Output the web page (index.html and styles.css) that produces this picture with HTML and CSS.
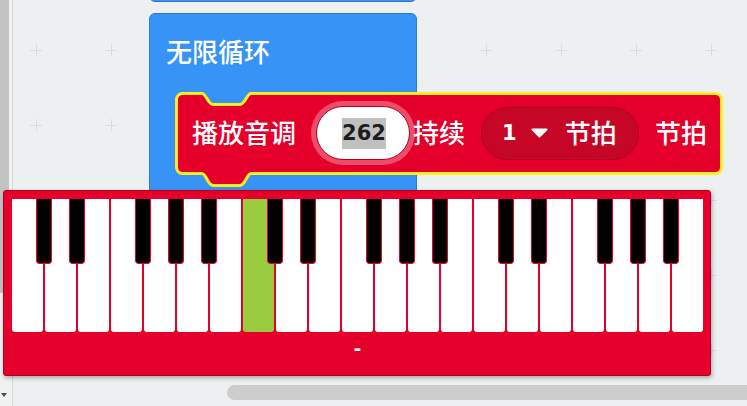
FILE: index.html
```html
<!DOCTYPE html>
<html lang="zh">
<head>
<meta charset="utf-8">
<link rel="stylesheet" href="styles.css">
</head>
<body>
<div class="app">
  <div class="vscroll">
    <div class="vthumb"></div>
    <div class="varrow"></div>
  </div>
  <div class="workspace">
    <svg class="grid" width="100%" height="100%">
      <defs>
        <pattern id="cross" x="-14" y="13" width="75" height="75" patternUnits="userSpaceOnUse">
          <path d="M31 37.5H43M37.5 31V43" stroke="#d9dde0" stroke-width="1"/>
        </pattern>
      </defs>
      <rect width="100%" height="100%" fill="url(#cross)"/>
    </svg>
  </div>

  <div class="block-above"></div>
  <div class="forever"><span class="forever-label">无限循环</span></div>

  <div class="tone">
    <svg class="tone-shape" width="548" height="97" viewBox="0 0 548 97">
      <path d="M1.5 8.5A6 6 0 0 1 7.5 2.5H27C31 2.5 33 13.5 38 13.5H65C70 13.5 72 2.5 76 2.5H540.5A6 6 0 0 1 546.5 8.5V76.5A6 6 0 0 1 540.5 82.5H76C72 82.5 70 94.5 65 94.5H38C33 94.5 31 82.5 27 82.5H7.5A6 6 0 0 1 1.5 76.5Z" fill="#e5002b" stroke="#fdee22" stroke-width="3"/>
    </svg>
    <div class="tone-row">
      <span class="label">播放音调</span>
      <span class="field"><span class="field-text">262</span></span>
      <span class="label after-field">持续</span>
      <span class="dropdown">
        <span class="dd-num">1</span>
        <svg class="dd-arrow" width="17" height="10" viewBox="0 0 17 10"><path d="M1.5 1.5H15.5L8.5 8.5Z" fill="#fff" stroke="#fff" stroke-width="2" stroke-linejoin="round"/></svg>
        <span class="label dd-label">节拍</span>
      </span>
      <span class="label after-dd">节拍</span>
    </div>
  </div>

  <div class="piano">
    <div class="keys">
      <div class="wk"></div><div class="wk"></div><div class="wk"></div><div class="wk"></div><div class="wk"></div><div class="wk"></div><div class="wk"></div>
      <div class="wk active"></div><div class="wk"></div><div class="wk"></div><div class="wk"></div><div class="wk"></div><div class="wk"></div><div class="wk"></div>
      <div class="wk"></div><div class="wk"></div><div class="wk"></div><div class="wk"></div><div class="wk"></div><div class="wk"></div><div class="wk"></div>
      <div class="bk" style="left:24px"></div>
      <div class="bk" style="left:57px"></div>
      <div class="bk" style="left:123px"></div>
      <div class="bk" style="left:156px"></div>
      <div class="bk" style="left:189px"></div>
      <div class="bk" style="left:255px"></div>
      <div class="bk" style="left:288px"></div>
      <div class="bk" style="left:354px"></div>
      <div class="bk" style="left:387px"></div>
      <div class="bk" style="left:420px"></div>
      <div class="bk" style="left:486px"></div>
      <div class="bk" style="left:519px"></div>
      <div class="bk" style="left:585px"></div>
      <div class="bk" style="left:618px"></div>
      <div class="bk" style="left:651px"></div>
    </div>
    <div class="note-label">-</div>
  </div>

  <div class="hscroll"></div>
</div>
</body>
</html>
```
FILE: styles.css
```css
html, body {
  margin: 0;
  padding: 0;
}
body {
  width: 747px;
  height: 406px;
  overflow: hidden;
  font-family: "Noto Sans CJK SC", "Noto Sans", sans-serif;
}
.app {
  position: relative;
  width: 747px;
  height: 406px;
  display: flex;
  overflow: hidden;
  background: #ecf0f1;
}
.vscroll {
  width: 12px;
  flex: 0 0 12px;
  border-right: 1px solid #d8d8d8;
  background: #f0f1f1;
  display: flex;
  flex-direction: column;
}
.vthumb {
  width: 9px;
  height: 293px;
  background: #c3c3c3;
}
.varrow {
  margin-top: auto;
  margin-bottom: 9px;
  margin-left: 1px;
  width: 0;
  height: 0;
  border-left: 3.5px solid transparent;
  border-right: 3.5px solid transparent;
  border-top: 4px solid #4a4a4a;
}
.workspace {
  flex: 1;
  position: relative;
  background: #ecf0f1;
}
.grid {
  display: block;
}
.block-above {
  position: absolute;
  left: 149px;
  top: -10px;
  width: 268px;
  height: 12px;
  box-sizing: border-box;
  background: #3793f5;
  border: 1px solid #2a78d2;
  border-radius: 0 0 6px 6px;
}
.forever {
  position: absolute;
  left: 149px;
  top: 13px;
  width: 268px;
  height: 300px;
  box-sizing: border-box;
  background: #3793f5;
  border: 1px solid #2a78d2;
  border-radius: 6px;
  padding: 21px 0 0 16px;
}
.forever-label {
  color: #fff;
  font-size: 26px;
  font-weight: 500;
  line-height: 32px;
  display: block;
}
.tone {
  position: absolute;
  left: 175px;
  top: 91px;
  width: 548px;
  height: 97px;
}
.tone-shape {
  position: absolute;
  left: 0;
  top: 0;
}
.tone-row {
  position: relative;
  height: 84px;
  display: flex;
  align-items: center;
  padding-left: 17px;
}
.label {
  color: #fff;
  font-size: 26px;
  font-weight: 500;
  line-height: 32px;
  white-space: nowrap;
  margin-top: -2px;
}
.field {
  margin-left: 20px;
  width: 94px;
  height: 54px;
  box-sizing: border-box;
  background: #fff;
  border: 1px solid #b0001f;
  border-radius: 27px;
  box-shadow: 0 0 0 5px rgba(255, 255, 255, 0.3);
  display: flex;
  align-items: center;
  justify-content: center;
  padding-left: 2px;
}
.field-text {
  background: #c0c0c0;
  color: #1d1d1d;
  font-family: "DejaVu Sans", sans-serif;
  font-weight: bold;
  font-size: 21px;
  line-height: 31px;
  height: 31px;
  padding: 0 0.5px;
}
.after-field {
  margin-left: 3px;
}
.dropdown {
  margin-left: 16px;
  width: 158px;
  height: 53px;
  box-sizing: border-box;
  background: #c60626;
  border: 1px solid #b0001e;
  border-radius: 27px;
  display: flex;
  align-items: center;
  padding-left: 20px;
}
.dd-num {
  color: #fff;
  font-family: "DejaVu Sans", sans-serif;
  font-weight: bold;
  font-size: 21px;
  line-height: 30px;
}
.dd-arrow {
  margin-left: 14px;
  display: block;
}
.dd-label {
  margin-left: 17px;
}
.after-dd {
  margin-left: 16px;
}
.piano {
  position: absolute;
  left: 3px;
  top: 190px;
  width: 708px;
  height: 186px;
  box-sizing: border-box;
  background: #e5002b;
  border: 1px solid #b3001f;
  border-radius: 3px;
  box-shadow: 1px 2px 4px rgba(0, 0, 0, 0.3);
  padding: 8px 0 0 8px;
}
.keys {
  position: relative;
  width: 691px;
  height: 133px;
  display: flex;
  gap: 2px;
}
.wk {
  flex: 0 0 31px;
  height: 133px;
  background: #fff;
  border-radius: 0 0 3px 3px;
}
.wk.active {
  background: #99cc3e;
}
.bk {
  position: absolute;
  top: 0;
  width: 16px;
  height: 65px;
  box-sizing: border-box;
  background: #000;
  border: 1px solid #e5002b;
  border-top: none;
  border-radius: 0 0 4px 4px;
}
.note-label {
  width: 691px;
  text-align: center;
  color: #fff;
  font-family: "Liberation Sans", sans-serif;
  font-weight: bold;
  font-size: 22px;
  line-height: 22px;
  padding-top: 5px;
}
.hscroll {
  position: absolute;
  left: 227px;
  top: 385px;
  width: 540px;
  height: 15px;
  border-radius: 8px;
  background: #cdcdcd;
}
```
